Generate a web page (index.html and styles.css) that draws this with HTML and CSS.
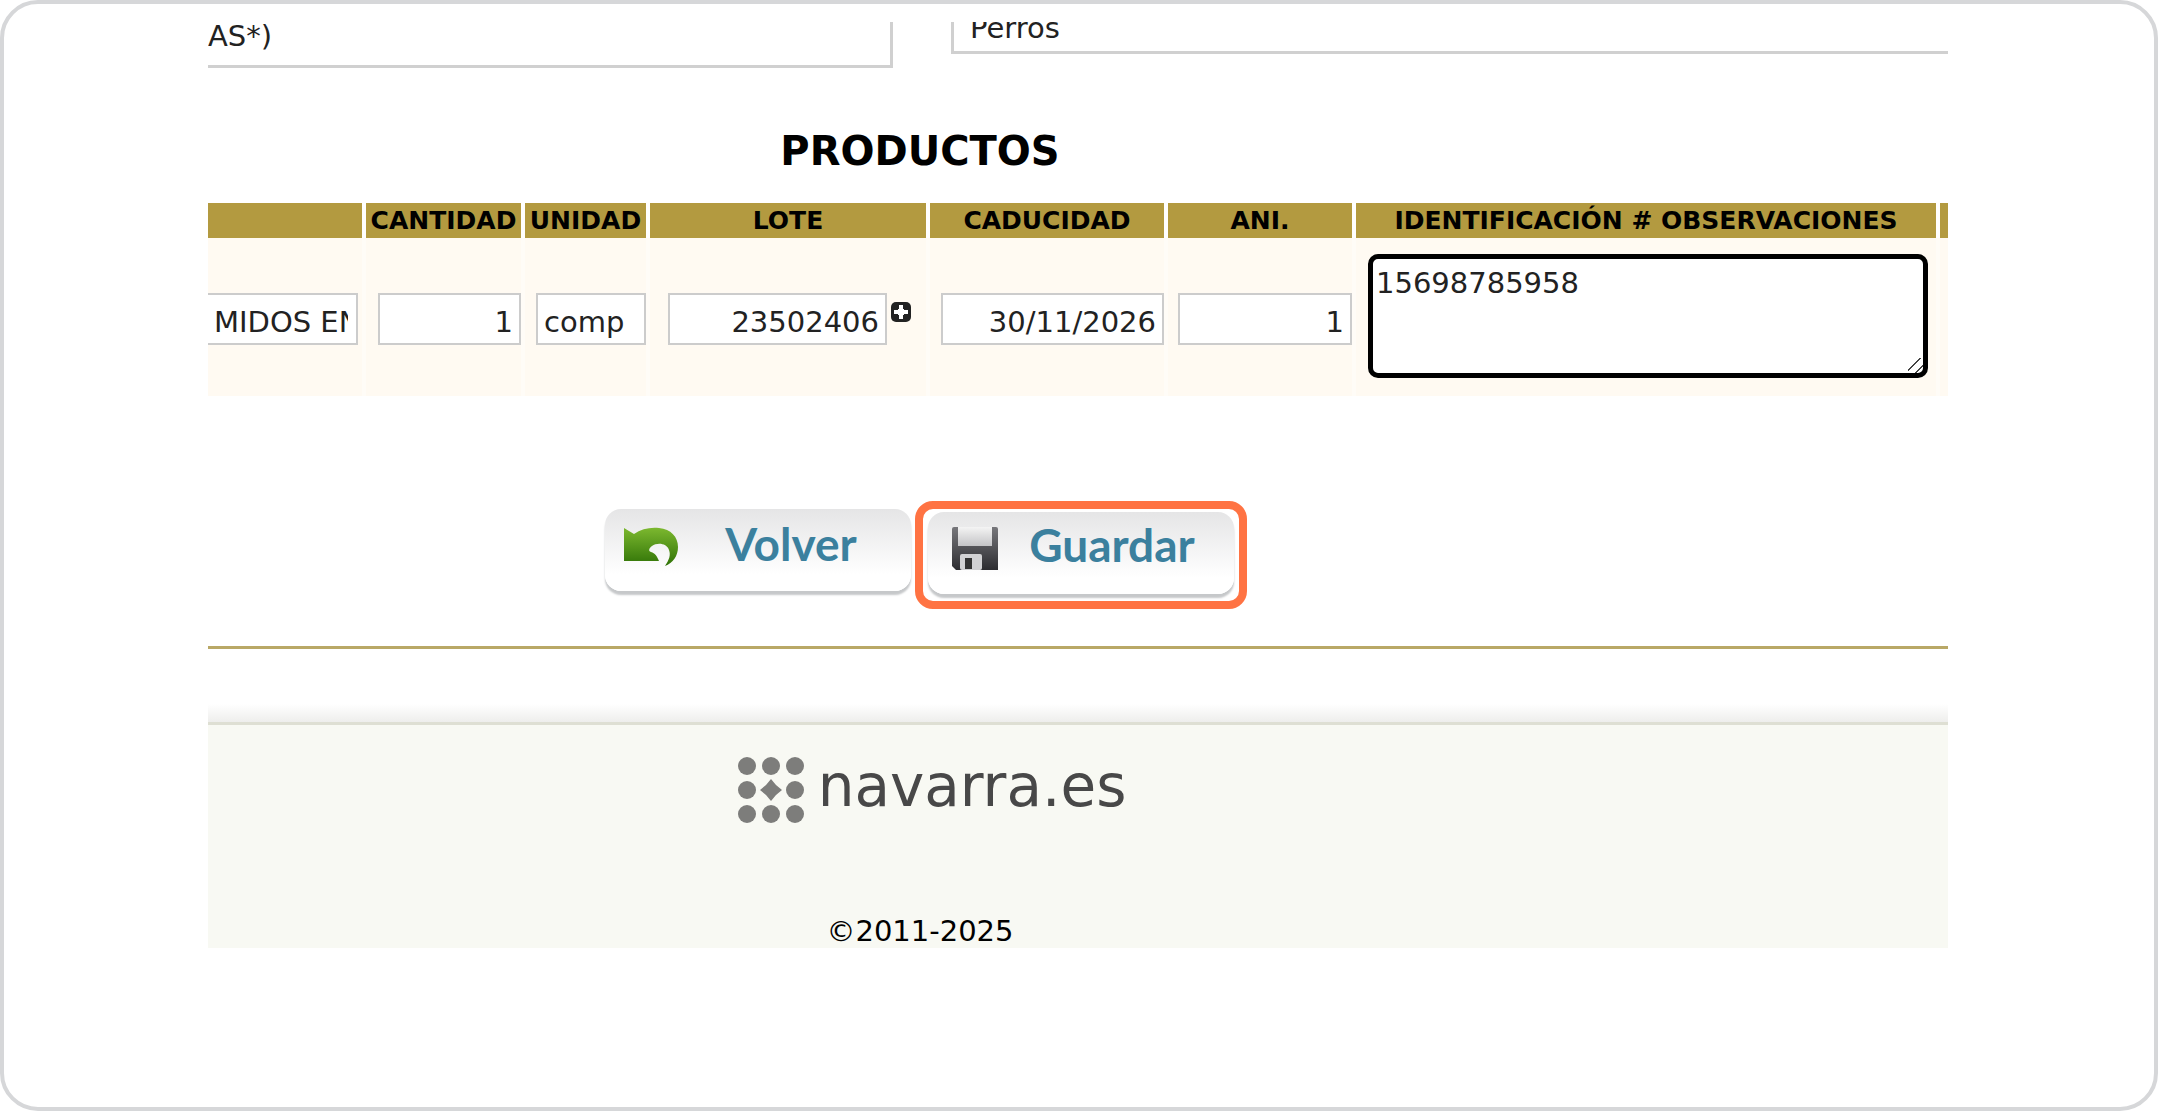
FILE: index.html
```
<!DOCTYPE html>
<html lang="es">
<head>
    <meta charset="UTF-8">
    <meta name="viewport" content="width=device-width, initial-scale=1.0">
    <title>Productos</title>
    <link rel="stylesheet" href="styles.css">
</head>
<body>

    <div class="frame">
        <main class="page">

            <div class="top-fields">
                <input type="text" class="field field-left" value="AS*)" aria-label="Explotación">
                <input type="text" class="field field-right" value="Perros" aria-label="Especie">
            </div>

            <h1 class="title">PRODUCTOS</h1>

            <table class="products">
                <colgroup>
                    <col class="col-name">
                    <col class="col-amount">
                    <col class="col-unit">
                    <col class="col-lot">
                    <col class="col-expiry">
                    <col class="col-animals">
                    <col>
                    <col class="col-rest">
                </colgroup>
                <thead>
                    <tr>
                        <th></th>
                        <th>CANTIDAD</th>
                        <th>UNIDAD</th>
                        <th>LOTE</th>
                        <th>CADUCIDAD</th>
                        <th>ANI.</th>
                        <th>IDENTIFICACIÓN # OBSERVACIONES</th>
                        <th></th>
                    </tr>
                </thead>
                <tbody>
                    <tr>
                        <td><input type="text" class="name" value="MIDOS EN" aria-label="Producto"></td>
                        <td><input type="text" class="amount number" value="1" aria-label="Cantidad"></td>
                        <td><input type="text" class="unit" value="comp" aria-label="Unidad"></td>
                        <td>
                            <div class="lot-cell">
                                <input type="text" class="lot number" value="23502406" aria-label="Lote">
                                <button type="button" class="add" aria-label="Añadir lote">
                                    <svg width="20" height="22" viewBox="0 0 20 22">
                                        <rect x="0" y="1" width="20" height="20" rx="5" fill="#222"/>
                                        <path d="M10 4v14M3 11h14" stroke="#fff" stroke-width="4"/>
                                        <rect x="7" y="8" width="6" height="6" fill="#fff"/>
                                    </svg>
                                </button>
                            </div>
                        </td>
                        <td><input type="text" class="expiry number" value="30/11/2026" aria-label="Caducidad"></td>
                        <td><input type="text" class="animals number" value="1" aria-label="Animales"></td>
                        <td><textarea class="notes" aria-label="Identificación y observaciones">15698785958</textarea></td>
                        <td></td>
                    </tr>
                </tbody>
            </table>

            <div class="actions">
                <button type="button" class="btn btn-back">
                    <svg class="btn-icon" width="56" height="42" viewBox="0 0 56 42">
                        <defs>
                            <linearGradient id="green" x1="0" y1="0" x2="0" y2="1">
                                <stop offset="0" stop-color="#7cb82f"/>
                                <stop offset="1" stop-color="#2f7206"/>
                            </linearGradient>
                        </defs>
                        <path fill="url(#green)" d="M1 2L11 8C18 3 27 1 36 2C48 3 55 11 55 21C55 30 50 37 42 40C46 34 48 29 46 24C44 17 34 16 29 20C26 22 25 25 28 26C32 27 34 30 36 35H1Z"/>
                    </svg>
                    <span>Volver</span>
                </button>
                <div class="highlight">
                    <button type="button" class="btn">
                        <svg class="btn-icon" width="46" height="44" viewBox="0 0 46 44">
                            <defs>
                                <linearGradient id="metal" x1="0" y1="0" x2="0" y2="1">
                                    <stop offset="0" stop-color="#77777b"/>
                                    <stop offset="1" stop-color="#2c2c30"/>
                                </linearGradient>
                                <linearGradient id="label" x1="0" y1="0" x2="0" y2="1">
                                    <stop offset="0" stop-color="#f4f4f4"/>
                                    <stop offset="1" stop-color="#c4c4c6"/>
                                </linearGradient>
                            </defs>
                            <path fill="url(#metal)" d="M2 0H44Q46 0 46 2V43H4L0 39V2Q0 0 2 0Z"/>
                            <rect x="6" y="0" width="34" height="19" fill="url(#label)"/>
                            <rect x="8" y="27" width="22" height="16" rx="2" fill="#d2d2d4"/>
                            <rect x="13" y="31" width="7" height="11" fill="#333"/>
                        </svg>
                        <span>Guardar</span>
                    </button>
                </div>
            </div>

            <footer class="footer">
                <a class="logo" href="#">
                    <svg width="66" height="66" viewBox="0 0 66 66" fill="#7d7d7b">
                        <circle cx="9" cy="9" r="9"/>
                        <circle cx="33" cy="9" r="9"/>
                        <circle cx="57" cy="9" r="9"/>
                        <circle cx="9" cy="33" r="9"/>
                        <path d="M33 22L38 28L44 33L38 38L33 44L28 38L22 33L28 28Z"/>
                        <circle cx="57" cy="33" r="9"/>
                        <circle cx="9" cy="57" r="9"/>
                        <circle cx="33" cy="57" r="9"/>
                        <circle cx="57" cy="57" r="9"/>
                    </svg>
                    <span>navarra.es</span>
                </a>
                <p class="copyright">©2011-2025</p>
            </footer>

        </main>
    </div>

</body>
</html>
```
FILE: styles.css
```
* {
    box-sizing: border-box;
}
body {
    margin: 0;
    background: #fff;
    color: #000;
    font-family: Verdana, "DejaVu Sans", sans-serif;
    font-size: 29px;
}
.frame {
    min-height: 100vh;
    padding: 18px 206px 18px 204px;
    border: 4px solid #d6d7d9;
    border-radius: 38px;
}
.page {
    overflow: hidden;
}
input, textarea {
    font: inherit;
    color: #222;
    background: #fff;
    border: 2px solid #ccc;
    border-radius: 0;
    outline: none;
}

/* campos superiores */
.top-fields {
    display: flex;
    align-items: flex-start;
    gap: 58px;
    height: 46px;
    overflow: hidden;
}
.field {
    height: 64px;
    border-width: 3px;
    border-color: #d0d0d0;
}
.field-left {
    flex: 0 0 688px;
    margin: -18px 0 0 -3px;
    padding: 0;
}
.field-right {
    flex: 1;
    margin: -32px -3px 0 0;
    padding: 12px 16px 0;
}
.title {
    margin: 0;
    padding: 59px 316px 27px 0;
    font-size: 40px;
    line-height: 49px;
    text-align: center;
}

/* tabla de productos */
.products {
    width: 100%;
    table-layout: fixed;
    border-collapse: separate;
    border-spacing: 0;
}
.col-name { width: 158px; }
.col-amount { width: 159px; }
.col-unit { width: 125px; }
.col-lot { width: 280px; }
.col-expiry { width: 238px; }
.col-animals { width: 188px; }
.col-rest { width: 8px; }
th {
    height: 35px;
    padding: 0;
    background: #b39a40;
    border-right: 4px solid #fff;
    font-size: 25px;
    line-height: 35px;
    white-space: nowrap;
}
td {
    height: 158px;
    padding: 4px 0 0;
    background: #fffaf2;
    border-right: 4px solid #fffcf7;
    text-align: right;
    vertical-align: middle;
}
th:last-child, td:last-child {
    border-right: none;
}
td input {
    display: block;
    height: 52px;
    margin-left: auto;
    padding: 5px 6px 0;
}
.number {
    text-align: right;
}
.name {
    width: 150px;
    margin-left: 0;
    padding-right: 8px;
    border-left: none;
}
.amount { width: 143px; }
.unit { width: 110px; }
.expiry { width: 223px; }
.animals { width: 174px; }
.lot-cell {
    display: flex;
    align-items: flex-start;
    gap: 4px;
    padding-left: 18px;
}
.lot {
    width: 219px;
    margin: 0;
}
.add {
    display: flex;
    margin-top: 8px;
    padding: 0;
    background: none;
    border: none;
    cursor: pointer;
}
.notes {
    display: block;
    width: calc(100% - 20px);
    height: 124px;
    margin: 0 8px 6px 12px;
    padding: 7px 3px;
    border: 5px solid #000;
    border-radius: 10px;
    line-height: 35px;
}
.notes::-webkit-scrollbar {
    width: 24px;
    height: 24px;
}
.notes::-webkit-resizer {
    background: linear-gradient(135deg, transparent 40%, #444 40%, #444 46%, transparent 46%, transparent 72%, #444 72%, #444 78%, transparent 78%);
}

/* botones */
.actions {
    display: flex;
    justify-content: center;
    align-items: flex-start;
    gap: 4px;
    padding: 105px 304px 37px 0;
    border-bottom: 3px solid #b9a866;
}
.btn {
    display: flex;
    align-items: flex-start;
    width: 306px;
    height: 82px;
    padding: 17px 18px 0;
    background: linear-gradient(#e5e5e6, #fff 80%);
    border: none;
    border-radius: 16px;
    box-shadow: 0 4px 2px #c6c8ca;
    color: #3b809e;
    font-family: "Trebuchet MS", Lato, sans-serif;
    font-size: 46px;
    font-weight: bold;
    line-height: 36px;
    cursor: pointer;
}
.btn-back {
    margin-top: 8px;
}
.btn span {
    flex: 1;
    padding-left: 10px;
    text-align: center;
}
.btn-icon {
    flex: none;
}
.highlight {
    padding: 3px 5px 7px;
    border: 8px solid #ff7343;
    border-radius: 18px;
}
.highlight .btn {
    padding: 15px 18px 0 24px;
}

/* pie */
.footer {
    margin-top: 55px;
    padding: 0 316px 0 0;
    height: 244px;
    background: linear-gradient(#fff, #eeeeec 18px, #dedfd3 18px, #dedfd3 21px, #f8f9f3 21px);
    text-align: center;
}
.logo {
    display: flex;
    justify-content: center;
    align-items: center;
    gap: 14px;
    padding: 53px 0 0 24px;
    color: #484848;
    font-size: 58px;
    line-height: 58px;
    text-decoration: none;
}
.logo span {
    padding-bottom: 8px;
}
.copyright {
    margin: 0;
    padding-top: 90px;
    line-height: 36px;
}
```
